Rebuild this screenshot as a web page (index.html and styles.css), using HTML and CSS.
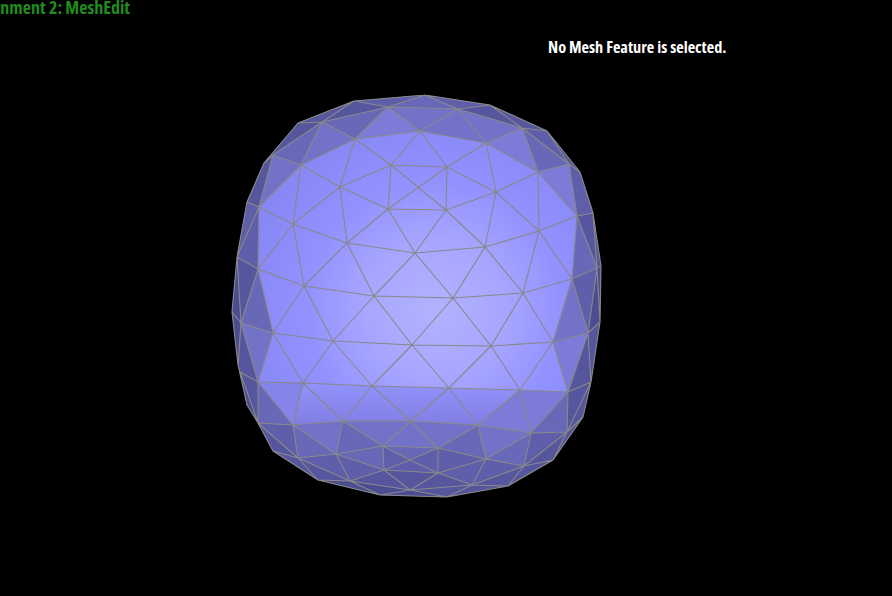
FILE: index.html
```html
<!DOCTYPE html>
<html lang="en">

<head>
  <meta charset="UTF-8">
  <title>Assignment 2: MeshEdit</title>
  <link rel="stylesheet" href="styles.css">
</head>

<body>
  <div id="viewport">
    <!-- the mesh: faces first, then one path for the wireframe -->
    <svg id="mesh" viewBox="0 0 892 596" width="892" height="596">
      <defs>
        <radialGradient id="lit" gradientUnits="userSpaceOnUse" cx="435" cy="310" r="200">
          <stop offset="0" stop-color="#b2b2ff" />
          <stop offset="0.35" stop-color="#a6a6ff" />
          <stop offset="0.65" stop-color="#9191ff" />
          <stop offset="1" stop-color="#8686f4" />
        </radialGradient>
        <linearGradient id="fall" gradientUnits="userSpaceOnUse" x1="0" y1="380" x2="0" y2="430">
          <stop offset="0" stop-color="#9494ff" />
          <stop offset="1" stop-color="#7c7ce0" />
        </linearGradient>
      </defs>

      <polygon class="hull" points="425,95 354,101 298,123 264,163 247,202 237,257 232,312 238,365 247,405 258,423 273,451 318,480 380,495 447,497 508,486 553,460 583,417 591,382 600,322 601,266 593,213 580,172 547,131 490,105" />

      <!-- top rim -->
      <polygon class="t-e" points="354,101 425,95 388,107" />
      <polygon class="t-a" points="354,101 388,107 322,122" />
      <polygon class="t-a" points="354,101 322,122 298,123" />
      <polygon class="t-a" points="298,123 322,122 273,155 264,163" />
      <polygon class="t-b" points="388,107 425,95 458,109" />
      <polygon class="t-e" points="425,95 490,105 458,109" />
      <polygon class="t-a" points="490,105 522,128 458,109" />
      <polygon class="t-a" points="490,105 547,131 522,128" />
      <polygon class="t-e" points="522,128 547,131 569,164" />
      <polygon class="t-a" points="547,131 580,172 569,164" />
      <polygon class="t-b" points="322,122 388,107 355,139" />
      <polygon class="t-c" points="388,107 458,109 420,131" />
      <polygon class="t-g" points="355,139 388,107 420,131" />
      <polygon class="t-c" points="420,131 458,109 486,143" />
      <polygon class="t-c" points="458,109 522,128 486,143" />
      <polygon class="t-g" points="486,143 522,128 538,172" />
      <polygon class="t-b" points="522,128 569,164 538,172" />
      <polygon class="t-c" points="322,122 355,139 301,165" />
      <polygon class="t-b" points="322,122 301,165 273,155" />

      <!-- right rim -->
      <polygon class="t-g" points="538,172 569,164 577,216" />
      <polygon class="t-e" points="569,164 580,172 593,213 577,216" />
      <polygon class="t-a" points="577,216 593,213 597,268" />
      <polygon class="t-a" points="593,213 601,266 597,268" />
      <polygon class="t-b" points="577,216 597,268 572,279" />
      <polygon class="t-e" points="572,279 597,268 588,333" />
      <polygon class="t-d" points="597,268 601,266 600,322" />
      <polygon class="t-d" points="597,268 600,322 588,333" />
      <polygon class="t-c" points="553,342 572,279 588,333" />
      <polygon class="t-g" points="553,342 588,333 568,392" />
      <polygon class="t-a" points="588,333 600,322 591,382" />
      <polygon class="t-a" points="588,333 591,382 568,392" />
      <polygon class="t-a" points="568,392 591,382 567,432" />
      <polygon class="t-a" points="591,382 583,417 567,432" />
      <polygon class="t-a" points="567,432 583,417 553,460" />

      <!-- left rim -->
      <polygon class="t-c" points="273,155 301,165 259,207" />
      <polygon class="t-a" points="264,163 273,155 259,207 247,202" />
      <polygon class="t-e" points="247,202 259,207 237,257" />
      <polygon class="t-e" points="259,207 258,269 237,257" />
      <polygon class="t-a" points="237,257 258,269 241,323" />
      <polygon class="t-b" points="258,269 273,333 241,323" />
      <polygon class="t-d" points="237,257 241,323 232,312" />
      <polygon class="t-d" points="232,312 241,323 238,365" />
      <polygon class="t-a" points="241,323 258,382 240,372 238,365" />
      <polygon class="t-c" points="273,333 258,382 241,323" />
      <polygon class="t-a" points="240,372 258,382 258,423" />
      <polygon class="t-d" points="240,372 258,423 247,405" />

      <!-- band under the lit part -->
      <polygon class="t-fall" points="303,383 372,386 343,421" />
      <polygon class="t-fall" points="372,386 411,421 343,421" />
      <polygon class="t-fall" points="372,386 449,388 411,421" />
      <polygon class="t-fall" points="449,388 478,425 411,421" />
      <polygon class="t-fall" points="449,388 520,390 478,425" />
      <polygon class="t-fall" points="303,383 343,421 293,425" />
      <polygon class="t-h" points="258,382 303,383 293,425" />
      <polygon class="t-g" points="478,425 520,390 531,433" />
      <polygon class="t-g" points="520,390 568,392 531,433" />

      <!-- bottom -->
      <polygon class="t-b" points="258,382 293,425 258,423" />
      <polygon class="t-e" points="258,423 293,425 298,458" />
      <polygon class="t-a" points="258,423 298,458 273,451" />
      <polygon class="t-a" points="273,451 298,458 318,480" />
      <polygon class="t-a" points="298,458 350,481 318,480" />
      <polygon class="t-d" points="318,480 350,481 380,495" />
      <polygon class="t-b" points="293,425 336,454 298,458" />
      <polygon class="t-c" points="293,425 343,421 336,454" />
      <polygon class="t-e" points="298,458 336,454 350,481" />
      <polygon class="t-e" points="336,454 384,470 350,481" />
      <polygon class="t-b" points="336,454 383,446 384,470" />
      <polygon class="t-b" points="343,421 383,446 336,454" />
      <polygon class="t-c" points="343,421 411,421 383,446" />
      <polygon class="t-b" points="383,446 438,448 410,460" />
      <polygon class="t-c" points="411,421 438,448 383,446" />
      <polygon class="t-c" points="411,421 478,425 438,448" />
      <polygon class="t-b" points="478,425 486,459 438,448" />
      <polygon class="t-e" points="438,448 486,459 438,473" />
      <polygon class="t-c" points="478,425 531,433 486,459" />
      <polygon class="t-b" points="486,459 531,433 524,466" />
      <polygon class="t-e" points="531,433 567,432 524,466" />
      <polygon class="t-a" points="567,432 553,460 524,466" />
      <polygon class="t-a" points="524,466 553,460 508,486" />
      <polygon class="t-e" points="486,459 524,466 472,485" />
      <polygon class="t-a" points="472,485 524,466 508,486" />
      <polygon class="t-a" points="472,485 508,486 447,497" />
      <polygon class="t-e" points="438,473 486,459 472,485" />
      <polygon class="t-a" points="438,473 472,485 410,490" />
      <polygon class="t-a" points="410,490 472,485 447,497" />
      <polygon class="t-d" points="380,495 410,490 447,497" />
      <polygon class="t-d" points="350,481 410,490 380,495" />
      <polygon class="t-a" points="384,470 410,490 350,481" />
      <polygon class="t-a" points="384,470 438,473 410,490" />
      <polygon class="t-e" points="383,446 410,460 384,470" />
      <polygon class="t-e" points="410,460 438,448 438,473" />
      <polygon class="t-e" points="384,470 410,460 438,473" />
      <polygon class="t-b" points="568,392 567,432 531,433" />

      <path class="wire" d="
        M425 95 L354 101 L298 123 L264 163 L247 202 L237 257 L232 312 L238 365 L247 405 L258 423 L273 451 L318 480 L380 495 L447 497 L508 486 L553 460 L583 417 L591 382 L600 322 L601 266 L593 213 L580 172 L547 131 L490 105 Z
        M354 101 L388 107 L425 95 L458 109 L490 105 L522 128 L547 131 L569 164 L580 172
        M388 107 L458 109 L522 128 L569 164 L577 216 L593 213 L597 268 L601 266
        M354 101 L322 122 L298 123 M388 107 L322 122 L273 155 L264 163
        M322 122 L355 139 L388 107 L420 131 L458 109 L486 143 L522 128 L538 172 L569 164
        M322 122 L301 165 L273 155 L259 207 L247 202 M355 139 L301 165 L259 207 L237 257
        M355 139 L420 131 L486 143 L538 172 L577 216
        M355 139 L391 165 L420 131 L447 167 L486 143 L496 192 L538 172 L539 231 L577 216
        M355 139 L340 187 L301 165 L293 224 L259 207 L258 269 L237 257 L241 323 L232 312
        M391 165 L447 167 L446 210 L388 209 L391 165 L446 210 M447 167 L388 209
        M391 165 L340 187 L388 209 L347 243 L340 187 L293 224 L347 243 L415 253 L388 209
        M447 167 L496 192 L446 210 L415 253 L485 247 L446 210 M496 192 L485 247 L539 231 L496 192
        M293 224 L258 269 L304 286 L293 224 M347 243 L304 286 L374 296 L347 243
        M415 253 L374 296 L453 298 L415 253 M485 247 L453 298 L523 293 L485 247
        M539 231 L523 293 L572 279 L539 231 M577 216 L572 279 L597 268 L577 216
        M258 269 L241 323 L273 333 L258 269 M304 286 L273 333 L333 341 L304 286
        M374 296 L333 341 L412 345 L374 296 M453 298 L412 345 L491 346 L453 298
        M523 293 L491 346 L553 342 L523 293 M572 279 L553 342 L588 333 L572 279
        M597 268 L588 333 L600 322 L597 268 M241 323 L238 365 M241 323 L258 382 L273 333
        M273 333 L303 383 L333 341 L372 386 L412 345 L449 388 L491 346 L520 390 L553 342 L568 392 L588 333 L591 382 L568 392
        M240 372 L258 382 L303 383 L372 386 L449 388 L520 390 L568 392
        M240 372 L258 423 L258 382 L293 425 L303 383 L343 421 L372 386 L411 421 L449 388 L478 425 L520 390 L531 433 L568 392 L567 432 L591 382
        M258 423 L293 425 L343 421 L411 421 L478 425 L531 433 L567 432 L583 417
        M258 423 L298 458 L293 425 L336 454 L343 421 L383 446 L411 421 L438 448 L478 425 L486 459 L531 433 L524 466 L567 432 L553 460
        M273 451 L298 458 L336 454 L383 446 L438 448 L486 459 L524 466 L553 460
        M298 458 L318 480 L350 481 L298 458 M350 481 L336 454 L384 470 L350 481 L380 495
        M350 481 L410 490 L384 470 L383 446 L410 460 L438 448 L438 473 L410 460 L384 470 L438 473 L410 490
        M380 495 L410 490 L447 497 L472 485 L410 490 M438 473 L486 459 L472 485 L438 473
        M472 485 L524 466 L508 486 L472 485" />
    </svg>

    <div id="hud">
      <div id="title"><span>Assignment 2: MeshEdit</span></div>
      <p id="status">No Mesh Feature is selected.</p>
    </div>
  </div>
</body>

</html>
```

FILE: styles.css
```css
* {
  margin: 0;
}

body {
  width: 892px;
  height: 596px;
  overflow: hidden;
  background: #000;
  font-family: 'Open Sans', sans-serif;
}

#viewport {
  position: relative;
  width: 100%;
  height: 100%;
}

#mesh {
  position: absolute;
  top: 0;
  left: 0;
}

#hud {
  position: relative;
  display: flex;
  flex-direction: column;
  gap: 20px;
}

#title {
  display: flex;
  justify-content: flex-end;
  width: 130px;
  height: 19px;
  overflow: hidden;
  white-space: nowrap;

  font-size: 18px;
  line-height: 15px;
  font-weight: bold;
  font-stretch: 75%;
  color: #228b22;
}

#status {
  padding-left: 548px;

  font-size: 16.3px;
  line-height: 16px;
  font-weight: bold;
  font-stretch: 75%;
  color: #fff;
}

.hull {
  fill: url(#lit);
}

.wire {
  fill: none;
  stroke: #888;
  stroke-width: 1.1;
  stroke-linejoin: round;
}

.t-fall { fill: url(#fall); }
.t-d { fill: #4c4c92; }
.t-a { fill: #56569e; }
.t-e { fill: #5e5eaa; }
.t-b { fill: #6868b8; }
.t-c { fill: #7272c8; }
.t-g { fill: #7c7cd8; }
.t-h { fill: #8484ea; }
```
